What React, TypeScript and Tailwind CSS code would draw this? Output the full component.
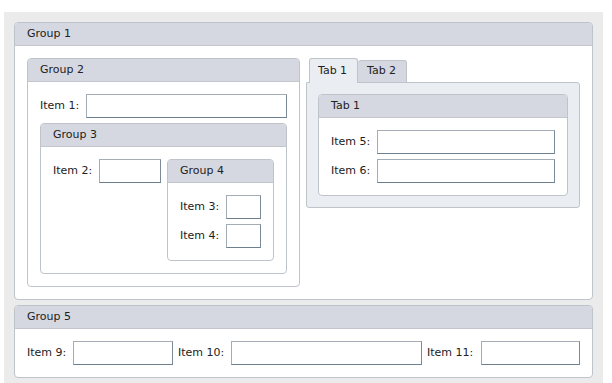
import type { ReactNode } from 'react'

const font = { fontFamily: '"DejaVu Sans", Verdana, sans-serif' }

function Group({ title, children, className = '' }: { title: string; children: ReactNode; className?: string }) {
  return (
    <div className={`border border-[#bfc3ca] rounded-[4px] bg-white overflow-hidden ${className}`}>
      <div className="h-[23px] bg-[#d5d8e0] border-b border-[#c3c6cd] pl-[12px] flex items-center text-[11px] text-[#222]">
        {title}
      </div>
      <div className="p-[12px]">{children}</div>
    </div>
  )
}

function Field({ label, labelW = 'w-[46px]', inputW }: { label: string; labelW?: string; inputW?: string }) {
  return (
    <div className="flex items-center shrink-0">
      <span className={`${labelW} shrink-0 text-[11px] text-[#222] whitespace-nowrap`}>{label}</span>
      <div
        className={`h-[24px] bg-white border border-[#a4acb5] border-r-[#7d8b98] border-b-[#6e7f8e] ${inputW ?? 'flex-1'}`}
      />
    </div>
  )
}

export default function App() {
  return (
    <div className="w-[612px] h-[383px] bg-white pt-[12px] pl-[4px] overflow-hidden" style={font}>
      <div className="w-[599px] h-[371px] bg-[#ebebeb] pt-[10px] px-[10px] flex flex-col gap-[5px]">
        <Group title="Group 1">
          <div className="flex gap-[6px] items-start">
            {/* left column */}
            <Group title="Group 2" className="w-[273px] shrink-0">
              <div className="flex flex-col gap-[5px]">
                <Field label="Item 1:" />
                <Group title="Group 3">
                  <div className="flex gap-[6px] items-start">
                    <Field label="Item 2:" inputW="w-[62px]" />
                    <Group title="Group 4" className="w-[108px]">
                      <div className="flex flex-col gap-[5px]">
                        <Field label="Item 3:" inputW="w-[37px]" />
                        <Field label="Item 4:" inputW="w-[37px]" />
                      </div>
                    </Group>
                  </div>
                </Group>
              </div>
            </Group>

            {/* tabs */}
            <div className="w-[274px] shrink-0 flex flex-col">
              <div className="flex items-end pl-[3px] h-[24px] text-[11px] text-[#222]">
                <div className="w-[49px] h-[25px] -mb-px relative z-10 bg-[#eaedf1] border border-b-0 border-[#bfc3ca] rounded-t-[3px] pl-[8px] flex items-center">
                  Tab 1
                </div>
                <div className="w-[49px] h-[22px] bg-[#d5d8e0] border border-l-0 border-b-0 border-[#bfc3ca] rounded-t-[3px] pl-[9px] flex items-center">
                  Tab 2
                </div>
              </div>
              <div className="bg-[#eaedf1] border border-[#bfc3ca] rounded-[3px] rounded-tl-none p-[11px]">
                <Group title="Tab 1">
                  <div className="flex flex-col gap-[5px]">
                    <Field label="Item 5:" />
                    <Field label="Item 6:" />
                  </div>
                </Group>
              </div>
            </div>
          </div>
        </Group>

        <Group title="Group 5">
          <div className="flex gap-[5px]">
            <Field label="Item 9:" inputW="w-[100px]" />
            <Field label="Item 10:" labelW="w-[53px]" inputW="w-[191px]" />
            <Field label="Item 11:" labelW="w-[54px]" inputW="w-[99px]" />
          </div>
        </Group>
      </div>
    </div>
  )
}
